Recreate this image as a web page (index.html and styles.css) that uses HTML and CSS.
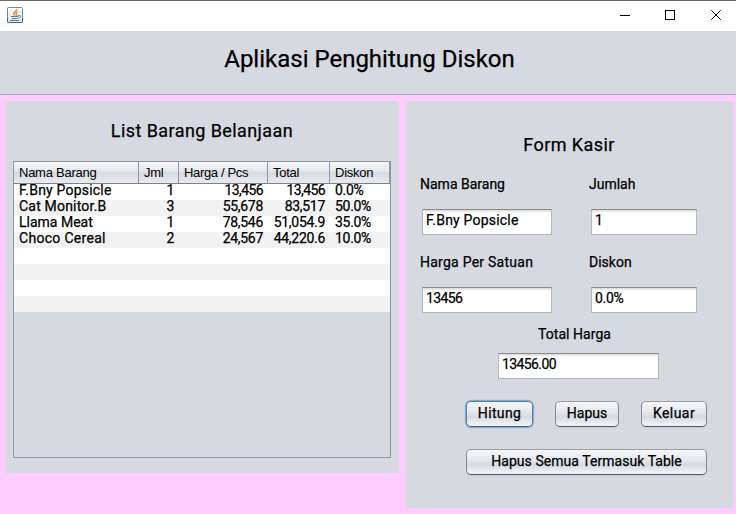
FILE: index.html
```html
<!DOCTYPE html>
<html lang="id">
<head>
<meta charset="utf-8">
<title>Aplikasi Penghitung Diskon</title>
<link rel="stylesheet" href="styles.css">
</head>
<body>
<div class="window">
  <div class="titlebar">
    <svg class="java" width="16" height="16" viewBox="0 0 16 16">
      <defs><linearGradient id="g" x1="0" y1="0" x2="0" y2="1"><stop offset="0" stop-color="#fff"/><stop offset="1" stop-color="#dce3e8"/></linearGradient></defs>
      <rect x=".5" y=".5" width="15" height="15" rx="1" fill="url(#g)" stroke="#6f8b9c"/>
      <path d="M.5 11v3.500q0 1 1 1h13q1 0 1-1V11" fill="none" stroke="#426780"/>
      <path d="M9.500 2.300Q10 3.700 8 4.800T7.500 8.500M10.500 4.800Q8.300 6 9.200 7.200T8.500 8.800" fill="none" stroke="#e8862e" stroke-width="1.400"/>
      <path d="M4 9.500h7.500M5 11.500h5.500M3 13.500h9" fill="none" stroke="#5382a1" stroke-width="1.200"/>
      <path d="M11 8.500h1.500q1 0 1 1t-2 1.500" fill="none" stroke="#5382a1"/>
    </svg>
    <svg class="controls" width="102" height="12" viewBox="0 0 102 12">
      <path d="M0 6.500h10" stroke="#000"/>
      <rect x="45.500" y="1.500" width="9" height="9" fill="none" stroke="#000"/>
      <path d="M91.300 1.300l9.400 9.400M100.700 1.300l-9.400 9.400" stroke="#000"/>
    </svg>
  </div>
  <header class="banner">Aplikasi Penghitung Diskon</header>
  <main class="content">
    <section class="panel list">
      <h2>List Barang Belanjaan</h2>
      <div class="scroll">
        <table>
          <colgroup><col class="c-name"><col class="c-qty"><col class="c-price"><col class="c-total"><col class="c-disc"></colgroup>
          <thead><tr><th>Nama Barang</th><th>Jml</th><th class="tight">Harga / Pcs</th><th>Total</th><th>Diskon</th></tr></thead>
          <tbody>
            <tr><td>F.Bny Popsicle</td><td class="num">1</td><td class="num ones">13,456</td><td class="num ones">13,456</td><td class="pct">0.0%</td></tr>
            <tr><td>Cat Monitor.B</td><td class="num">3</td><td class="num">55,678</td><td class="num">83,517</td><td class="pct">50.0%</td></tr>
            <tr><td class="plain">Llama Meat</td><td class="num">1</td><td class="num">78,546</td><td class="num">51,054.9</td><td class="pct">35.0%</td></tr>
            <tr><td class="wide">Choco Cereal</td><td class="num">2</td><td class="num">24,567</td><td class="num">44,220.6</td><td class="pct">10.0%</td></tr>
            <tr><td colspan="5"></td></tr>
            <tr><td colspan="5"></td></tr>
            <tr><td colspan="5"></td></tr>
            <tr><td colspan="5"></td></tr>
          </tbody>
        </table>
      </div>
    </section>
    <section class="panel form">
      <h2>Form Kasir</h2>
      <div class="fields">
        <div><div class="label">Nama Barang</div><div class="field text">F.Bny Popsicle</div></div>
        <div><div class="label">Jumlah</div><div class="field">1</div></div>
        <div><div class="label spaced">Harga Per Satuan</div><div class="field">13456</div></div>
        <div><div class="label">Diskon</div><div class="field pct">0.0%</div></div>
      </div>
      <div class="total">
        <div class="label">Total Harga</div>
        <div class="field">13456.00</div>
      </div>
      <div class="actions">
        <div class="btn focus">Hitung</div>
        <div class="btn hapus">Hapus</div>
        <div class="btn keluar">Keluar</div>
        <div class="btn all">Hapus Semua Termasuk Table</div>
      </div>
    </section>
  </main>
</div>
</body>
</html>
```
FILE: styles.css
```css
* { box-sizing: border-box; }
body { margin: 0; }
.window {
  width: 736px;
  height: 514px;
  overflow: hidden;
  background: #ffccff;
  color: #000;
  font: 400 14px/20px Roboto, sans-serif;
  -webkit-text-stroke: .25px #000;
  white-space: nowrap;
}
.titlebar {
  display: flex;
  justify-content: space-between;
  height: 31px;
  padding: 6px 14px 0 7px;
  border-top: 1px solid #6a6a6a;
  background: #fff;
}
.controls { margin-top: 2px; }
.banner {
  height: 64px;
  padding: 12px 0 0 3px;
  border-bottom: 1px solid #9fabb2;
  background: #d6d9df;
  font-size: 24px;
  font-weight: 400;
  line-height: 32px;
  text-align: center;
}
.content {
  display: flex;
  align-items: flex-start;
  gap: 6px;
  padding: 6px 3px 0 5px;
}
.panel { background: #d6d9df; }
h2 {
  margin: 0;
  font-size: 18px;
  font-weight: 400;
  line-height: 24px;
  letter-spacing: .42px;
  text-align: center;
}
.list { width: 394px; height: 372px; padding: 18px 8px 0; }
.scroll {
  width: 378px;
  height: 297px;
  margin-top: 18px;
  border: 1px solid #9297a1;
}
table { width: 376px; border-collapse: separate; border-spacing: 0; table-layout: fixed; }
.c-name { width: 125px; }
.c-qty { width: 40px; }
.c-price { width: 89px; }
.c-total { width: 62px; }
.c-disc { width: 60px; }
th {
  height: 22px;
  padding: 0 0 0 5px;
  border-right: 1px solid #9297a1;
  border-bottom: 1px solid #7c818c;
  background: linear-gradient(#f6f7f8, #e3e6e9 45%, #d8dbe0 50%, #e8eaee 100%);
  font: 400 13px/21px "Liberation Sans", sans-serif;
  letter-spacing: -.25px;
  text-align: left;
  -webkit-text-stroke: 0;
}
.tight { letter-spacing: -.35px; }
td {
  height: 16px;
  padding: 0 5px;
  background: #fff;
  line-height: 12px;
  vertical-align: top;
  letter-spacing: .2px;
}
tr:nth-child(even) td { background: #f2f2f2; }
.num { text-align: right; letter-spacing: -.3px; }
.ones { letter-spacing: -.6px; }
.plain { letter-spacing: 0; }
.wide { letter-spacing: .3px; }
td.pct { letter-spacing: -.3px; }
.form { width: 328px; height: 407px; padding-top: 32px; }
.fields {
  display: grid;
  grid-template-columns: 130px 106px;
  gap: 17px 39px;
  margin: 17px 0 0 17px;
}
.label { margin: 0 0 15px -2px; }
.spaced { letter-spacing: .25px; }
.field {
  height: 26px;
  padding-left: 3px;
  border: 1px solid #b5b7bb;
  border-top-color: #898b90;
  background: linear-gradient(#d4d5d7, #f5f5f5 2px, #fff 3px);
  letter-spacing: -.6px;
}
.field.text { letter-spacing: .2px; }
.field.pct { letter-spacing: -.3px; }
.total { width: 161px; margin: 11px 0 0 93px; }
.total .label { margin: 0 0 9px 40px; letter-spacing: .05px; }
.actions {
  display: grid;
  grid-template-columns: 67px 64px 66px;
  gap: 22px;
  width: 241px;
  margin: 22px 0 0 61px;
}
.btn {
  height: 26px;
  padding-top: 1px;
  border: 1px solid #85888e;
  border-top-color: #9a9da3;
  border-bottom-color: #555960;
  border-radius: 5px;
  background: linear-gradient(#f6f7f9, #e3e5ea 45%, #d6d9df 60%, #f2f4f9);
  box-shadow: 0 1px 0 #c2c6cd;
  text-align: center;
}
.focus { border-color: #5c7fa4; border-bottom-color: #48627f; box-shadow: 0 0 1px 1px #73a4d1; letter-spacing: .35px; }
.keluar { letter-spacing: .45px; }
.all { grid-column: 1 / -1; letter-spacing: .05px; }
```
